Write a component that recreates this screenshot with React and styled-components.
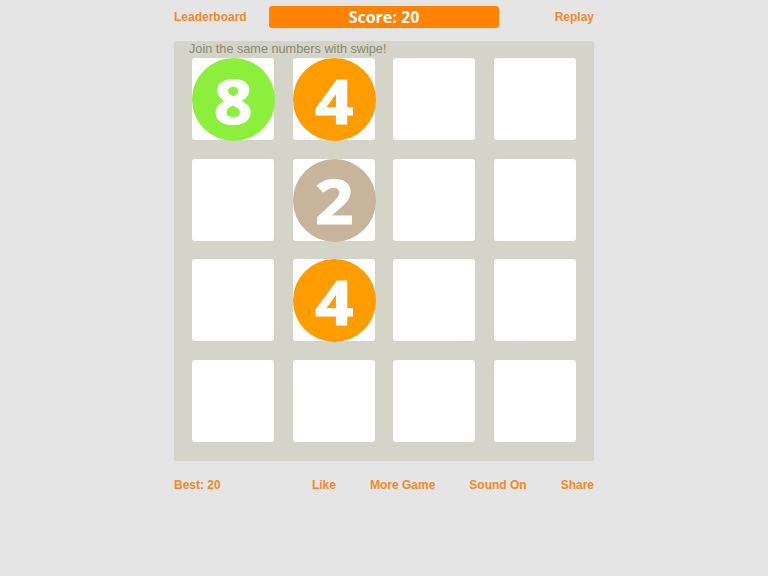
import styled, { createGlobalStyle } from "styled-components"

const GlobalStyle = createGlobalStyle`
  html, body {
    margin: 0;
    padding: 0;
    background: #e5e5e5;
    font-family: "Liberation Sans", Arial, sans-serif;
  }
`

const COLORS = {
  2: "#c8b49a",
  4: "#ff9c00",
  8: "#8cef3c",
}

const board = [
  [8, 4, 0, 0],
  [0, 2, 0, 0],
  [0, 4, 0, 0],
  [0, 0, 0, 0],
]

export default function App() {
  return (
    <>
      <GlobalStyle />
      <Page>
        <Header>
          <Link>Leaderboard</Link>
          <ScoreBar>Score: 20</ScoreBar>
          <Link $right>Replay</Link>
        </Header>
        <Board>
          <Hint>Join the same numbers with swipe!</Hint>
          {board.flat().map((n, i) => (
            <Cell key={i}>
              {n > 0 && (
                <Tile color={COLORS[n]}>
                  <Digit>{n}</Digit>
                </Tile>
              )}
            </Cell>
          ))}
        </Board>
        <Footer>
          <Link>Best: 20</Link>
          <Actions>
            <Link>Like</Link>
            <Link>More Game</Link>
            <Link>Sound On</Link>
            <Link>Share</Link>
          </Actions>
        </Footer>
      </Page>
    </>
  )
}

const Page = styled.div`
  width: 420px;
  margin: 0 auto;
  padding-top: 6px;
`
const Header = styled.div`
  display: grid;
  grid-template-columns: 1fr 230px 1fr;
  align-items: center;
  height: 22px;
  margin-bottom: 13px;
`
const Link = styled.span`
  color: #f08a2a;
  font-size: 12px;
  font-weight: bold;
  text-align: ${props => props.$right ? "right" : "left"};
`
const ScoreBar = styled.div`
  height: 22px;
  line-height: 22px;
  background: #ff8200;
  border-radius: 3px;
  color: #fff;
  font-family: "Open Sans", sans-serif;
  font-weight: bold;
  font-size: 16px;
  text-align: center;
`
const Board = styled.div`
  position: relative;
  display: grid;
  grid-template-columns: repeat(4, 82px);
  grid-auto-rows: 82px;
  column-gap: 18.67px;
  row-gap: 18.67px;
  padding: 17px 18px 19px 18px;
  background: #d4d4c8;
  border-radius: 2px;
`
const Hint = styled.div`
  position: absolute;
  top: 1px;
  left: 15px;
  color: #8a8a6c;
  font-size: 12.7px;
`
const Cell = styled.div`
  position: relative;
  background: #fff;
  border-radius: 3px;
`
const Tile = styled.div`
  position: absolute;
  inset: 0 -1px -1px 0;
  border-radius: 50%;
  background: ${props => props.color};
  color: #fff;
  display: flex;
  align-items: center;
  justify-content: center;
  padding-top: 2px;
  box-sizing: border-box;
  font-family: "Open Sans", sans-serif;
  font-weight: bold;
  font-size: 60px;
  -webkit-text-stroke: 1.2px #fff;
`
const Digit = styled.span`
  display: inline-block;
  transform: scaleX(1.12);
`
const Footer = styled.div`
  display: flex;
  align-items: center;
  margin-top: 17px;
`
const Actions = styled.div`
  display: flex;
  gap: 34px;
  margin-left: auto;
`
